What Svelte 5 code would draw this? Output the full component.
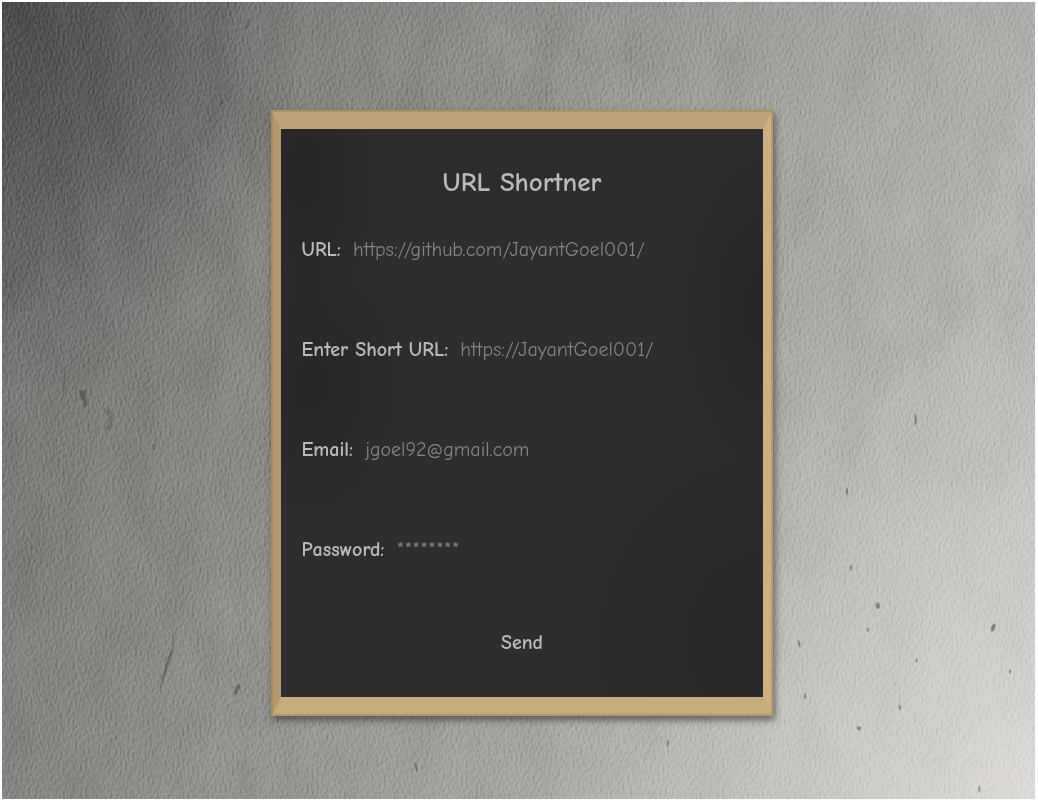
<script>
  const fields = [
    { id: 'url', label: 'URL:', type: 'url', hint: 'https://github.com/JayantGoel001/' },
    { id: 'short', label: 'Enter Short URL:', type: 'text', hint: 'https://JayantGoel001/' },
    { id: 'email', label: 'Email:', type: 'email', hint: 'jgoel92@gmail.com' },
    { id: 'password', label: 'Password:', type: 'password', hint: '********' }
  ];

  // Small pits in the concrete: x, y, radii and tilt
  const pits = [
    [236, 690, 2, 6, 25], [880, 606, 2, 3, 0], [996, 628, 2, 4, 20], [870, 630, 1, 2, 0],
    [801, 644, 1, 4, -15], [807, 697, 1, 3, 0], [902, 708, 1, 3, -10], [861, 729, 2, 2, 0],
    [918, 419, 1, 6, 0], [919, 661, 1, 2, 0], [1013, 672, 1, 2, 0], [669, 744, 1, 3, 10],
    [416, 768, 1, 5, -15], [247, 22, 1, 5, 10], [39, 165, 4, 1, -35], [849, 491, 1, 3, 0],
    [220, 102, 1, 4, 20], [853, 568, 1, 3, 0], [982, 790, 1, 3, 0], [153, 447, 1, 3, 0]
  ];
</script>

<main>
  <svg class="wall" viewBox="0 0 1038 800" preserveAspectRatio="none" aria-hidden="true">
    <defs>
      <filter id="grain" x="0" y="0" width="100%" height="100%" color-interpolation-filters="sRGB">
        <feTurbulence type="fractalNoise" baseFrequency="0.4 0.22" numOctaves="4" seed="8" />
        <feDiffuseLighting surfaceScale="0.9" lighting-color="#fff">
          <feDistantLight azimuth="200" elevation="32" />
        </feDiffuseLighting>
      </filter>
      <filter id="clouds" x="0" y="0" width="100%" height="100%" color-interpolation-filters="sRGB">
        <feTurbulence type="fractalNoise" baseFrequency="0.025 0.012" numOctaves="5" seed="21" />
        <feColorMatrix values="1.2 0 0 0 -0.1  1.2 0 0 0 -0.1  1.2 0 0 0 -0.1  0 0 0 0 1" />
      </filter>
      <filter id="soft"><feGaussianBlur stdDeviation="0.6" /></filter>
    </defs>
    <rect class="clouds" width="1038" height="800" filter="url(#clouds)" />
    <rect class="grain" width="1038" height="800" filter="url(#grain)" />
    <g fill="#4d4b48" opacity="0.6" filter="url(#soft)">
      {#each pits as [x, y, rx, ry, tilt]}
        <ellipse cx={x} cy={y} {rx} {ry} transform="rotate({tilt} {x} {y})" />
      {/each}
      <path d="M173 628l-1 24-3 8-6 18-5 15 3-16 6-20 4-7z" />
      <path d="M77 389l8 1-1 7 2 7-3 4-1-7-3-3z" />
      <path d="M101 407l7 2 4 5-1 13-3 3-7-1 5-5 1-8-5-4z" opacity=".5" />
      <path d="M63 364l2 12-3 18-2-1 2-16z" opacity=".5" />
    </g>
  </svg>

  <form class="board" onsubmit={(e) => e.preventDefault()}>
    <h1>URL Shortner</h1>
    {#each fields as f}
      <div class="field">
        <label for={f.id}>{f.label}</label>
        <input id={f.id} name={f.id} type={f.type} placeholder={f.hint} />
      </div>
    {/each}
    <button type="submit">Send</button>
  </form>
</main>

<style>
  :global(body) {
    margin: 0;
    background: #fcfcfc;
  }

  main {
    position: relative;
    isolation: isolate;
    box-sizing: border-box;
    min-height: 100vh;
    padding: 108px 0 82px 6px;
    border: solid #fcfcfc;
    border-width: 2px 3px 1px 2px;
    font-family: "Comic Neue", "Comic Sans MS", "Liberation Sans Narrow", sans-serif;
    font-variant-ligatures: none;
  }

  .wall {
    position: absolute;
    inset: 0;
    z-index: -1;
    width: 100%;
    height: 100%;
    background:
      radial-gradient(ellipse 30% 50% at 0 0, rgba(52, 54, 52, 0.6), transparent),
      radial-gradient(ellipse 50% 60% at 100% 100%, rgba(238, 235, 232, 0.5), transparent),
      linear-gradient(115deg, #686866 0%, #858582 28%, #999996 50%, #aeadaa 72%, #c8c6c3 100%);
  }

  .grain {
    mix-blend-mode: soft-light;
    opacity: 0.5;
  }

  .clouds {
    mix-blend-mode: soft-light;
    opacity: 0.12;
  }

  .board {
    display: flex;
    flex-direction: column;
    box-sizing: border-box;
    width: 100%;
    max-width: 502px;
    margin: 0 auto;
    padding: 32px 20px 38px 21px;
    border: solid;
    border-width: 19px 10px;
    border-color: #bea27a #ceaf81 #c8aa7f #b49871;
    background:
      radial-gradient(ellipse 70px 150px at 5% 8%, rgba(34, 34, 34, 0.7), transparent),
      radial-gradient(ellipse 90px 130px at 6% 45%, rgba(36, 36, 36, 0.8), transparent),
      radial-gradient(ellipse 80px 160px at 100% 32%, rgba(34, 34, 34, 0.7), transparent),
      radial-gradient(ellipse 180px 200px at 100% 90%, rgba(38, 38, 38, 0.8), transparent),
      #2d2d2d;
    background-origin: padding-box;
    outline: 2px solid rgba(150, 120, 80, 0.4);
    outline-offset: -2px;
    box-shadow: 2px 4px 7px rgba(40, 40, 40, 0.6);
    color: #bababa;
  }

  h1 {
    margin: 0 0 25px;
    font-size: 27px;
    font-weight: 700;
    line-height: 44px;
    text-align: center;
  }

  .field {
    display: flex;
    align-items: center;
    gap: 12px;
    height: 40px;
    margin-bottom: 60px;
    font-size: 20px;
    font-weight: 700;
    line-height: 40px;
  }

  .field:last-of-type {
    margin-bottom: 57px;
  }

  input {
    flex: 1;
    min-width: 0;
    height: 40px;
    padding: 0;
    border: 0;
    outline: 0;
    background: transparent;
    color: #bababa;
    font: inherit;
    font-weight: 400;
  }

  input::placeholder {
    color: #848484;
    opacity: 1;
  }

  button {
    align-self: center;
    padding: 0;
    border: 0;
    background: none;
    color: #bababa;
    font: inherit;
    font-size: 20px;
    font-weight: 700;
    line-height: 32px;
    cursor: pointer;
  }
</style>
